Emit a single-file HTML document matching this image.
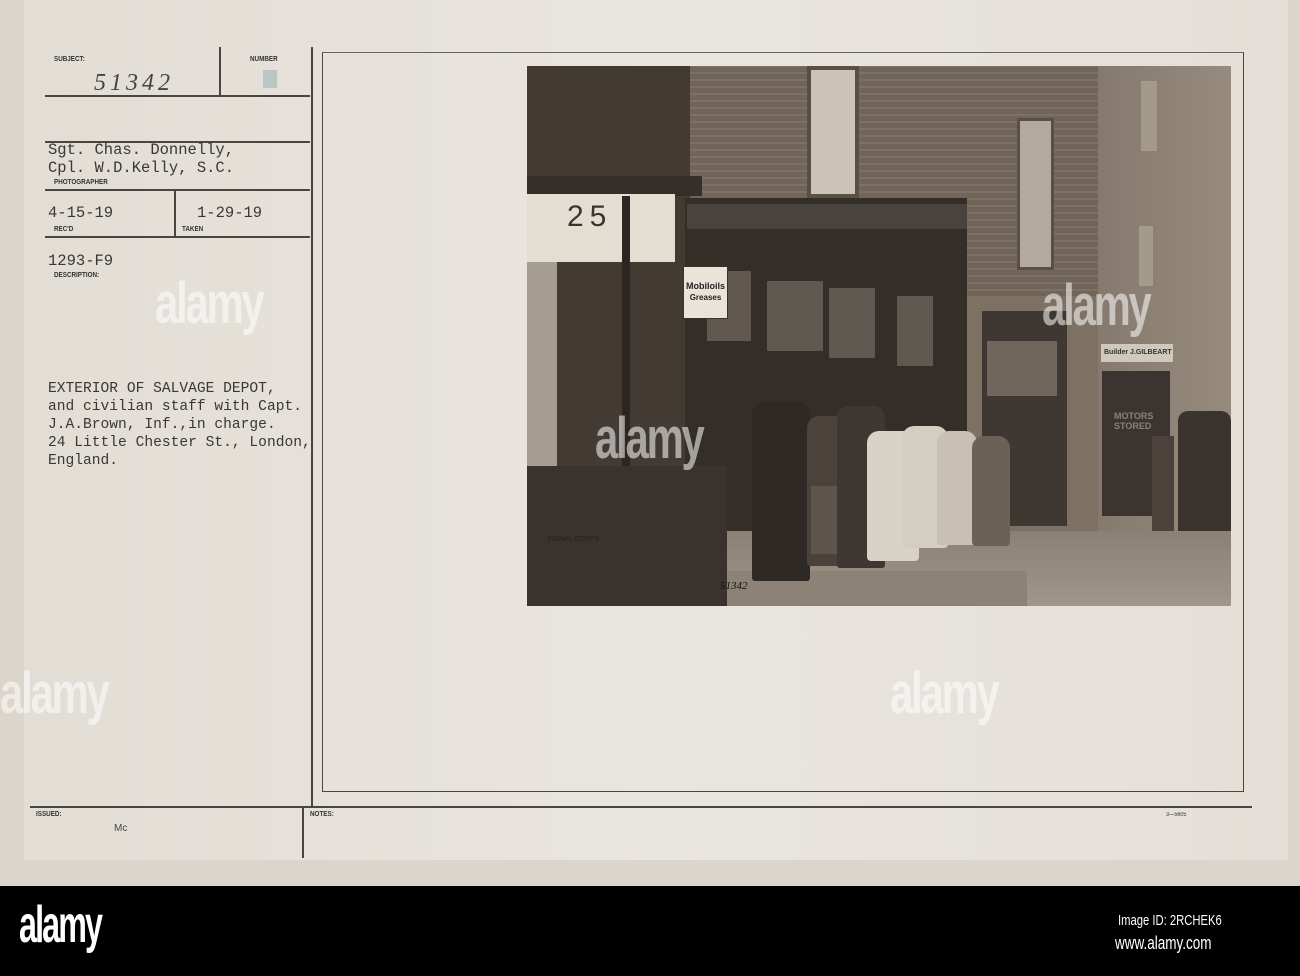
<!DOCTYPE html>
<html><head><meta charset="utf-8"><style>
*{margin:0;padding:0;box-sizing:border-box}
body{width:1300px;height:976px;overflow:hidden;background:#dcd5cc;position:relative;font-family:"Liberation Mono",monospace}
.a{position:absolute}
.card{left:24px;top:0;width:1264px;height:860px;background:linear-gradient(90deg,#e2ddd5,#e9e5df 50%,#e4dfd8)}
.hl{position:absolute;height:1.5px;background:#4a4540}
.vl{position:absolute;width:1.5px;background:#4a4540}
.lab{position:absolute;font-family:"Liberation Sans",sans-serif;font-weight:bold;font-size:7px;color:#333;transform:scaleX(.9);transform-origin:left}
.t{position:absolute;font-size:14.6px;color:#3a3734;white-space:pre;line-height:18px}
.wm{position:absolute;font-family:"Liberation Sans",sans-serif;font-weight:bold;color:rgba(255,255,255,.55);letter-spacing:-3px;transform:scaleX(.72);transform-origin:left}
.p{position:absolute}
</style></head><body>
<div class="a card"></div>
<div class="hl" style="left:45px;top:95px;width:265px"></div>
<div class="vl" style="left:219px;top:47px;height:48px"></div>
<div class="hl" style="left:45px;top:141px;width:265px"></div>
<div class="hl" style="left:45px;top:189px;width:265px"></div>
<div class="vl" style="left:174px;top:190px;height:47px"></div>
<div class="hl" style="left:45px;top:236px;width:265px"></div>
<div class="vl" style="left:311px;top:47px;height:760px"></div>
<div class="vl" style="left:302px;top:808px;height:50px"></div>
<div class="hl" style="left:30px;top:806px;width:1222px"></div>
<div class="a" style="left:322px;top:52px;width:922px;height:740px;border:1.5px solid #4a4540;border-top-color:#666"></div>

<div class="lab" style="left:54px;top:56px">SUBJECT:</div>
<div class="lab" style="left:250px;top:56px">NUMBER</div>
<div class="a" style="left:263px;top:70px;width:14px;height:18px;background:#b8c6c4"></div>
<div class="a" style="left:94px;top:70px;font-family:'Liberation Serif',serif;font-style:italic;font-size:24px;color:#444;letter-spacing:4px">51342</div>
<div class="t" style="left:48px;top:141px;font-size:15.5px">Sgt. Chas. Donnelly,
Cpl. W.D.Kelly, S.C.</div>
<div class="lab" style="left:54px;top:179px">PHOTOGRAPHER</div>
<div class="t" style="left:48px;top:204px;font-size:15.5px">4-15-19</div>
<div class="lab" style="left:54px;top:226px">REC'D</div>
<div class="t" style="left:197px;top:204px;font-size:15.5px">1-29-19</div>
<div class="lab" style="left:182px;top:226px">TAKEN</div>
<div class="t" style="left:48px;top:252px;font-size:15.5px">1293-F9</div>
<div class="lab" style="left:54px;top:272px">DESCRIPTION:</div>
<div class="t" style="left:48px;top:380px">EXTERIOR OF SALVAGE DEPOT,
and civilian staff with Capt.
J.A.Brown, Inf.,in charge.
24 Little Chester St., London,
England.</div>
<div class="lab" style="left:36px;top:811px">ISSUED:</div>
<div class="a" style="left:114px;top:823px;font-family:'Liberation Sans',sans-serif;font-size:10px;color:#444">Mc</div>
<div class="lab" style="left:310px;top:811px">NOTES:</div>
<div class="lab" style="left:1166px;top:812px;font-weight:normal;font-size:6px">3—5605</div>

<div class="a" style="left:527px;top:66px;width:704px;height:540px;overflow:hidden;background:#7d7164">
 <div class="p" style="left:163px;top:0;width:408px;height:230px;background:repeating-linear-gradient(0deg,#716559 0 5px,#7d7164 5px 7px)"></div>
 <div class="p" style="left:571px;top:0;width:133px;height:540px;background:linear-gradient(90deg,#857a6d,#968b7d)"></div>
 <div class="p" style="left:0;top:0;width:163px;height:540px;background:#433a33"></div>
 <div class="p" style="left:0;top:110px;width:175px;height:20px;background:#352e29"></div>
 <div class="p" style="left:0;top:128px;width:148px;height:68px;background:#e4ddd2"></div>
 <div class="p" style="left:40px;top:134px;font-family:'Liberation Sans',sans-serif;font-size:30px;color:#3a3430;letter-spacing:6px">25</div>
 <div class="p" style="left:95px;top:130px;width:8px;height:410px;background:#2b2622"></div>
 <div class="p" style="left:0;top:196px;width:30px;height:210px;background:#a69d92"></div>
 <div class="p" style="left:158px;top:132px;width:282px;height:390px;background:#342e29"></div>
 <div class="p" style="left:160px;top:138px;width:280px;height:25px;background:#4a423c"></div>
 <div class="p" style="left:180px;top:205px;width:44px;height:70px;background:#5f5750"></div>
 <div class="p" style="left:240px;top:215px;width:56px;height:70px;background:#5f5851"></div>
 <div class="p" style="left:302px;top:222px;width:46px;height:70px;background:#5f5851"></div>
 <div class="p" style="left:370px;top:230px;width:36px;height:70px;background:#5f5851"></div>
 <div class="p" style="left:156px;top:200px;width:45px;height:53px;background:#e9e3d8;border:1px solid #333;font-family:'Liberation Sans',sans-serif;font-size:9px;font-weight:bold;color:#222;text-align:center;padding-top:14px;line-height:11px">Mobiloils<br><span style="font-size:8px">Greases</span></div>
 <div class="p" style="left:280px;top:0;width:52px;height:132px;background:#cbc3b6;border:4px solid #5a4f45"></div>
 <div class="p" style="left:490px;top:52px;width:37px;height:152px;background:#b3aa9d;border:3px solid #5a4f45"></div>
 <div class="p" style="left:614px;top:15px;width:16px;height:70px;background:#a49a8c"></div>
 <div class="p" style="left:612px;top:160px;width:14px;height:60px;background:#a49a8c"></div>
 <div class="p" style="left:455px;top:245px;width:85px;height:215px;background:#3e3732"></div>
 <div class="p" style="left:460px;top:275px;width:70px;height:55px;background:#6f665c"></div>
 <div class="p" style="left:574px;top:278px;width:72px;height:18px;background:#d0c8bb;font-family:'Liberation Sans',sans-serif;font-size:7px;font-weight:bold;color:#333;line-height:18px;padding-left:3px">Builder J.GILBEART</div>
 <div class="p" style="left:575px;top:305px;width:68px;height:145px;background:#3b3430;color:#8a8177;font-family:'Liberation Sans',sans-serif;font-weight:bold;font-size:9px;padding:40px 0 0 12px;line-height:10px">MOTORS<br>STORED</div>
 <div class="p" style="left:651px;top:345px;width:53px;height:135px;background:#3a332e;border-radius:10px 10px 0 0"></div>
 <div class="p" style="left:625px;top:370px;width:22px;height:105px;background:#4a423b"></div>
 <div class="p" style="left:0;top:465px;width:704px;height:75px;background:linear-gradient(180deg,#8a8073,#a0968a)"></div>
 <div class="p" style="left:0;top:400px;width:200px;height:140px;background:#3a332d"></div>
 <div class="p" style="left:200px;top:505px;width:300px;height:35px;background:#8c8376"></div>
 <div class="p" style="left:225px;top:335px;width:58px;height:180px;background:#2f2925;border-radius:14px 14px 3px 3px"></div>
 <div class="p" style="left:280px;top:350px;width:42px;height:150px;background:#4b423c;border-radius:12px 12px 3px 3px"></div>
 <div class="p" style="left:284px;top:420px;width:36px;height:68px;background:#5d544c"></div>
 <div class="p" style="left:310px;top:340px;width:48px;height:162px;background:#3f3832;border-radius:12px 12px 3px 3px"></div>
 <div class="p" style="left:340px;top:365px;width:52px;height:130px;background:#d9d2c6;border-radius:12px 12px 4px 4px"></div>
 <div class="p" style="left:375px;top:360px;width:46px;height:122px;background:#d4cdc1;border-radius:12px 12px 4px 4px"></div>
 <div class="p" style="left:410px;top:365px;width:40px;height:114px;background:#c8c0b3;border-radius:12px 12px 4px 4px"></div>
 <div class="p" style="left:445px;top:370px;width:38px;height:110px;background:#6b6157;border-radius:12px 12px 4px 4px"></div>
 <div class="p" style="left:20px;top:470px;font-family:'Liberation Sans',sans-serif;font-size:7px;color:#222">SIGNAL CORPS</div>
 <div class="p" style="left:193px;top:514px;font-family:'Liberation Serif',serif;font-style:italic;font-size:11px;color:#111">51342</div>
</div>

<div class="wm" style="left:155px;top:270px;font-size:58px">alamy</div>
<div class="wm" style="left:0;top:660px;font-size:58px">alamy</div>
<div class="wm" style="left:595px;top:405px;font-size:58px">alamy</div>
<div class="wm" style="left:890px;top:660px;font-size:58px">alamy</div>
<div class="wm" style="left:1042px;top:272px;font-size:58px">alamy</div>

<div class="a" style="left:0;top:886px;width:1300px;height:90px;background:#000"></div>
<div class="a" style="left:19px;top:895px;font-family:'Liberation Sans',sans-serif;font-weight:bold;font-size:52px;color:#fff;letter-spacing:-3px;transform:scaleX(.62);transform-origin:left">alamy</div>
<div class="a" style="left:1118px;top:912px;font-family:'Liberation Sans',sans-serif;font-size:15px;color:#fff;transform:scaleX(.75);transform-origin:left">Image ID: 2RCHEK6</div>
<div class="a" style="left:1115px;top:933px;font-family:'Liberation Sans',sans-serif;font-size:18px;color:#fff;transform:scaleX(.75);transform-origin:left">www.alamy.com</div>
</body></html>
